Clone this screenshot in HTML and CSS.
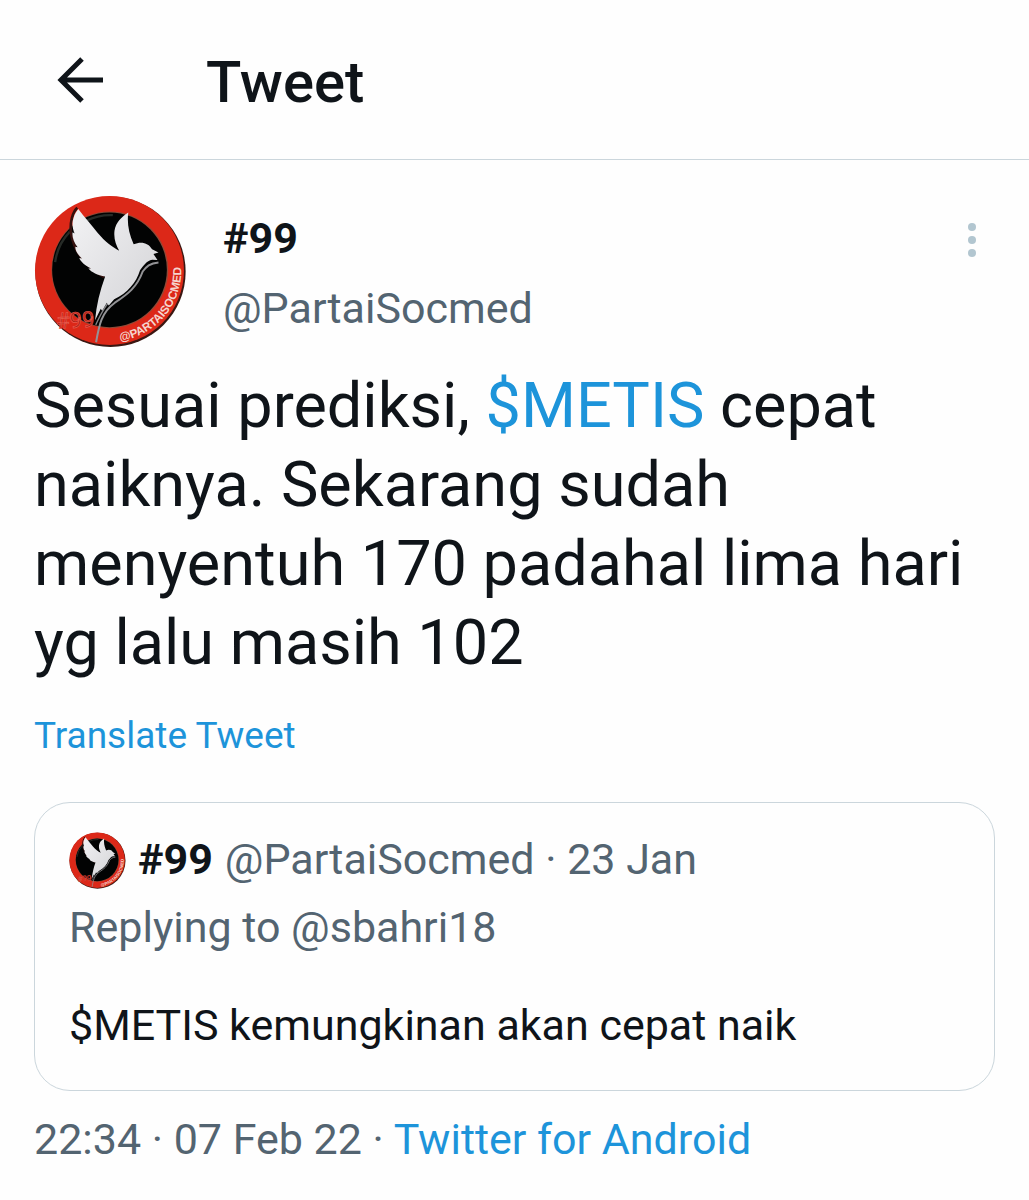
FILE: index.html
```html
<!DOCTYPE html>
<html lang="en">
<head>
<meta charset="utf-8">
<meta name="viewport" content="width=device-width, initial-scale=1">
<title>Tweet</title>
<link rel="stylesheet" href="styles.css">
</head>
<body>
<svg class="defs" aria-hidden="true">
  <defs>
    <linearGradient id="bird-fill" x1="0" y1="0" x2="1" y2="1">
      <stop offset="0" stop-color="#f2f2f4"/>
      <stop offset="1" stop-color="#d2d2d5"/>
    </linearGradient>
    <path id="badge-arc" d="M302 480 A212 212 0 0 0 480 230"/>
    <symbol id="badge" viewBox="45 45 456 456">
      <circle cx="273" cy="274" r="224" fill="#3a1712"/>
      <circle cx="270" cy="270" r="222" fill="#dc2818"/>
      <circle cx="271" cy="268" r="174" fill="#8f4a38"/>
      <circle cx="270" cy="268" r="171" fill="#020303"/>
      <path d="M108 245A163 163 0 0 1 152 154" fill="none" stroke="#262b27" stroke-width="7"/>
      <path d="M200 122A163 163 0 0 1 280 105" fill="none" stroke="#262b27" stroke-width="7"/>
      <path d="M174 83C160 96 152 125 155 158C164 211 194 255 254 290" fill="none" stroke="#35110e" stroke-width="8"/>
      <path d="M416 246C390 248 380 259 369 273C352 320 324 341 286 366C246 395 239 432 230 484" fill="none" stroke="#939396" stroke-width="6"/>
      <path d="M272 360C252 380 242 405 229 432" fill="none" stroke="#858588" stroke-width="4"/>
      <path d="M177 87C195 111 215 133 235 158C257 184 278 199 299 211C289 193 282 174 285 151C290 125 304 112 326 97C322 127 327 158 342 192C364 182 386 187 397 207L416 216L401 221L413 239L397 238C380 241 372 256 361 269C350 306 323 337 284 356L268 374L262 366L248 390L244 384L227 418C231 374 241 332 257 288C235 284 216 275 207 264L215 264C196 255 184 244 180 233L188 234C174 222 168 209 168 199L175 201C163 185 158 169 160 156L166 160C160 145 157 128 163 113C166 102 172 93 177 87Z" fill="url(#bird-fill)"/>
      <text class="badge-number" x="112" y="444" transform="rotate(-3 112 444)">#99</text>
      <text class="badge-handle"><textPath href="#badge-arc">@PARTAISOCMED</textPath></text>
    </symbol>
  </defs>
</svg>

<header class="topbar">
  <button class="icon-button back" type="button" aria-label="Back">
    <svg viewBox="0 0 48 48" aria-hidden="true"><path d="M47 24H5M26 3L5 24L26 45" fill="none" stroke="currentColor" stroke-width="5"/></svg>
  </button>
  <h1 class="title">Tweet</h1>
</header>

<main class="tweet">
  <div class="author">
    <svg class="avatar" role="img" aria-label="#99 avatar"><use href="#badge"/></svg>
    <div class="names">
      <strong class="name">#99</strong>
      <span class="handle">@PartaiSocmed</span>
    </div>
    <button class="icon-button more" type="button" aria-label="More">
      <svg viewBox="0 0 10 36" aria-hidden="true"><g fill="#b2c6d0"><circle cx="5" cy="5" r="4"/><circle cx="5" cy="18" r="4"/><circle cx="5" cy="31" r="4"/></g></svg>
    </button>
  </div>

  <p class="message">Sesuai prediksi, <a href="#metis">$METIS</a> cepat naiknya. Sekarang sudah menyentuh 170 padahal lima hari yg lalu masih 102</p>
  <a class="translate" href="#translate">Translate Tweet</a>

  <article class="quote">
    <div class="quote-author">
      <svg class="avatar-small" role="img" aria-label="#99 avatar"><use href="#badge"/></svg>
      <strong class="name">#99</strong>
      <span class="handle">@PartaiSocmed · 23 Jan</span>
    </div>
    <p class="replying">Replying to @sbahri18</p>
    <p class="quote-message">$METIS kemungkinan akan cepat naik</p>
  </article>

  <p class="meta">22:34 · 07 Feb 22 · <a href="#source">Twitter for Android</a></p>
</main>
</body>
</html>
```
FILE: styles.css
```css
* {
  box-sizing: border-box;
}

body {
  margin: 0;
  background: #fefefe;
  color: #0f1419;
  font-family: Roboto, "Liberation Sans", sans-serif;
  font-size: 43px;
  line-height: 60px;
}

h1,
p {
  margin: 0;
}

a {
  color: #1d94da;
  text-decoration: none;
}

.defs {
  position: absolute;
  width: 0;
  height: 0;
}

.icon-button {
  padding: 0;
  border: 0;
  background: none;
  color: inherit;
  cursor: pointer;
}

.icon-button svg {
  display: block;
}

.topbar {
  display: flex;
  align-items: center;
  gap: 102px;
  height: 160px;
  padding: 0 56px;
  border-bottom: 1px solid #cbd6dc;
}

.back svg {
  width: 48px;
  height: 48px;
}

.title {
  padding-top: 4px;
  font-size: 58px;
  font-weight: 500;
  line-height: 72px;
}

.tweet {
  padding: 35px 34px 32px;
}

.author {
  display: flex;
  align-items: flex-start;
}

.avatar {
  flex: none;
  width: 153px;
  height: 153px;
}

.names {
  display: flex;
  flex: 1;
  flex-direction: column;
  gap: 10px;
  padding: 13px 0 0 36px;
}

.name {
  font-weight: 700;
}

.handle,
.replying,
.meta {
  color: #536471;
}

.more {
  padding: 27px 18px 0 0;
}

.more svg {
  width: 10px;
  height: 36px;
}

.message {
  margin-top: 18px;
  font-size: 63px;
  line-height: 79px;
}

.translate {
  display: block;
  margin-top: 24px;
  font-size: 37px;
}

.quote {
  margin-top: 36px;
  padding: 26px 34px 35px;
  border: 1px solid #cbd6dc;
  border-radius: 36px;
}

.quote-author {
  display: flex;
  align-items: flex-end;
  gap: 12px;
}

.avatar-small {
  width: 57px;
  height: 57px;
}

.replying {
  margin-top: 8px;
}

.quote-message {
  margin-top: 38px;
}

.meta {
  margin-top: 18px;
}

.badge-number {
  fill: #a81f16;
  stroke: #ec5a4c;
  stroke-width: 2px;
  font-size: 66px;
}

.badge-handle {
  fill: #f5d5ce;
  font-family: "Liberation Sans", sans-serif;
  font-size: 35px;
  font-weight: 700;
}
```
